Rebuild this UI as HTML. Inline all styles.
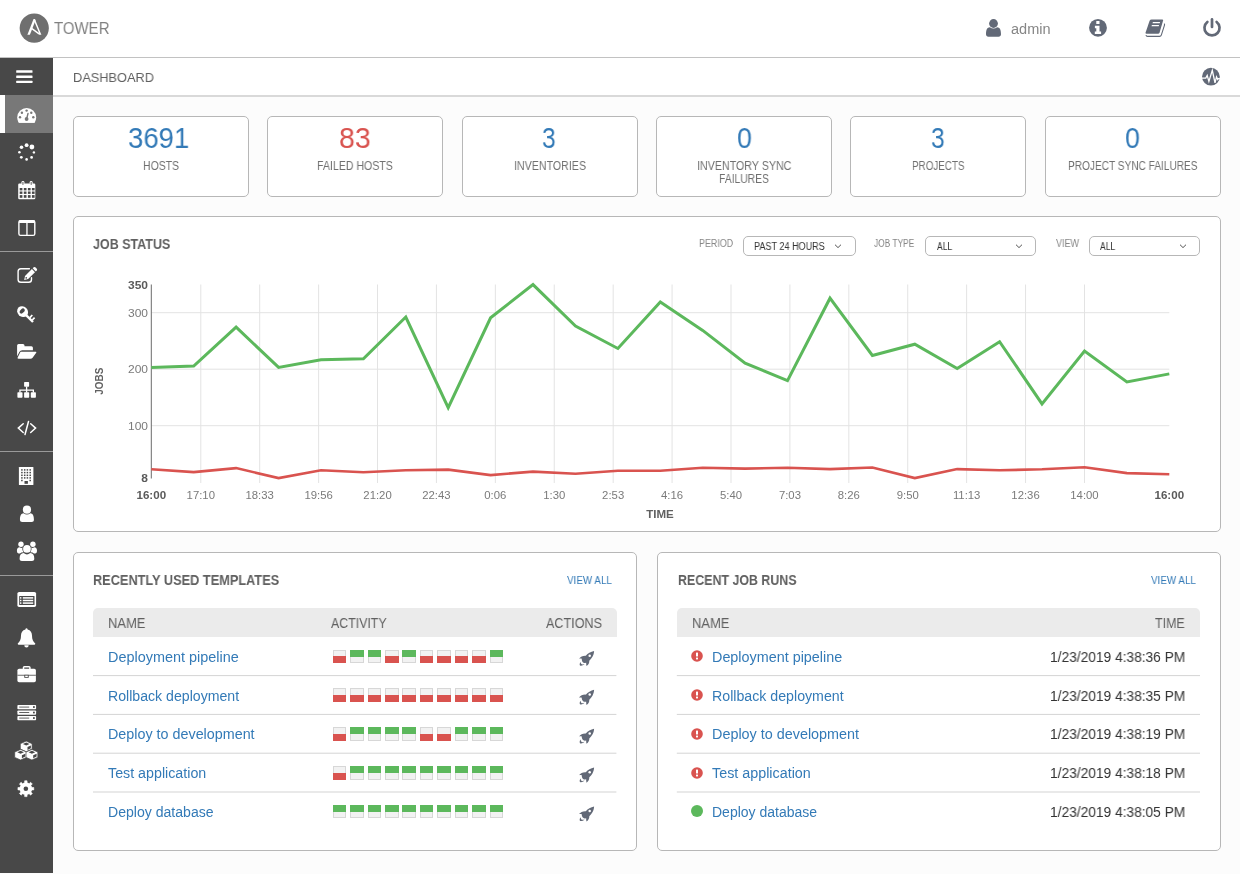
<!DOCTYPE html>
<html><head><meta charset="utf-8"><title>Ansible Tower - Dashboard</title>
<style>
html,body{margin:0;padding:0;}
body{will-change:transform;width:1240px;height:874px;position:relative;overflow:hidden;background:#fcfcfc;font-family:"Liberation Sans",sans-serif;}
.t{will-change:transform;position:absolute;white-space:nowrap;transform-origin:0 50%;}
.b{position:absolute;}
svg{overflow:visible}
</style></head><body>
<div class="b" style="left:0px;top:0px;width:1240px;height:57px;background:#fff;"></div>
<div class="b" style="left:0px;top:57px;width:1240px;height:1px;background:#c2c2c2;"></div>
<div class="b" style="left:53px;top:58px;width:1187px;height:37px;background:#fff;"></div>
<div class="b" style="left:53px;top:95px;width:1187px;height:2px;background:#d9d9d9;"></div>
<div class="b" style="left:0px;top:58px;width:53px;height:815px;background:#484848;"></div>
<div class="b" style="left:0px;top:95px;width:5px;height:38px;background:#fff;"></div>
<div class="b" style="left:5px;top:95px;width:48px;height:38px;background:#787878;"></div>
<div class="b" style="left:0px;top:251px;width:53px;height:1px;background:#9a9a9a;"></div>
<div class="b" style="left:0px;top:451px;width:53px;height:1px;background:#9a9a9a;"></div>
<div class="b" style="left:0px;top:575px;width:53px;height:1px;background:#9a9a9a;"></div>
<span class="t" style="left:54.00px;top:20.01px;font-size:17px;line-height:17px;color:#808080;transform:scaleX(0.8808);">TOWER</span>
<span class="t" style="left:73.30px;top:70.90px;font-size:13px;line-height:13px;color:#606060;transform:scaleX(0.9831);">DASHBOARD</span>
<span class="t" style="left:1010.80px;top:22.15px;font-size:14px;line-height:14px;color:#868686;transform:scaleX(1.0373);">admin</span>
<div class="b" style="left:73px;top:116px;width:176px;height:81px;background:#fff;border:1px solid #b7b7b7;border-radius:5px;box-sizing:border-box;"></div>
<span class="t" style="left:128.30px;top:123.41px;font-size:30px;line-height:30px;color:#337ab7;transform:scaleX(0.9189);">3691</span>
<span class="t" style="left:143.00px;top:159.94px;font-size:12px;line-height:12px;color:#707070;transform:scaleX(0.8721);">HOSTS</span>
<div class="b" style="left:267.2px;top:116px;width:176px;height:81px;background:#fff;border:1px solid #b7b7b7;border-radius:5px;box-sizing:border-box;"></div>
<span class="t" style="left:339.00px;top:123.41px;font-size:30px;line-height:30px;color:#d9534f;transform:scaleX(0.9489);">83</span>
<span class="t" style="left:317.30px;top:159.94px;font-size:12px;line-height:12px;color:#707070;transform:scaleX(0.8810);">FAILED HOSTS</span>
<div class="b" style="left:461.6px;top:116px;width:176px;height:81px;background:#fff;border:1px solid #b7b7b7;border-radius:5px;box-sizing:border-box;"></div>
<span class="t" style="left:542.30px;top:123.41px;font-size:30px;line-height:30px;color:#337ab7;transform:scaleX(0.8214);">3</span>
<span class="t" style="left:513.60px;top:159.94px;font-size:12px;line-height:12px;color:#707070;transform:scaleX(0.8876);">INVENTORIES</span>
<div class="b" style="left:656px;top:116px;width:176px;height:81px;background:#fff;border:1px solid #b7b7b7;border-radius:5px;box-sizing:border-box;"></div>
<span class="t" style="left:736.50px;top:123.41px;font-size:30px;line-height:30px;color:#337ab7;transform:scaleX(0.8929);">0</span>
<span class="t" style="left:696.75px;top:159.94px;font-size:12px;line-height:12px;color:#707070;transform:scaleX(0.8908);">INVENTORY SYNC</span>
<span class="t" style="left:719.00px;top:173.34px;font-size:12px;line-height:12px;color:#707070;transform:scaleX(0.8609);">FAILURES</span>
<div class="b" style="left:850.3px;top:116px;width:176px;height:81px;background:#fff;border:1px solid #b7b7b7;border-radius:5px;box-sizing:border-box;"></div>
<span class="t" style="left:931.20px;top:123.41px;font-size:30px;line-height:30px;color:#337ab7;transform:scaleX(0.8214);">3</span>
<span class="t" style="left:912.10px;top:159.94px;font-size:12px;line-height:12px;color:#707070;transform:scaleX(0.8193);">PROJECTS</span>
<div class="b" style="left:1044.8px;top:116px;width:176px;height:81px;background:#fff;border:1px solid #b7b7b7;border-radius:5px;box-sizing:border-box;"></div>
<span class="t" style="left:1125.20px;top:123.41px;font-size:30px;line-height:30px;color:#337ab7;transform:scaleX(0.8929);">0</span>
<span class="t" style="left:1068.05px;top:159.94px;font-size:12px;line-height:12px;color:#707070;transform:scaleX(0.8418);">PROJECT SYNC FAILURES</span>
<div class="b" style="left:73px;top:216px;width:1148px;height:316px;background:#fff;border:1px solid #b7b7b7;border-radius:5px;box-sizing:border-box;"></div>
<span class="t" style="left:92.70px;top:237.35px;font-size:14px;line-height:14px;color:#606060;font-weight:700;transform:scaleX(0.8920);">JOB STATUS</span>
<span class="t" style="left:698.70px;top:238.73px;font-size:10px;line-height:10px;color:#868686;transform:scaleX(0.8930);">PERIOD</span>
<span class="t" style="left:874.40px;top:238.73px;font-size:10px;line-height:10px;color:#868686;transform:scaleX(0.8361);">JOB TYPE</span>
<span class="t" style="left:1056.10px;top:238.73px;font-size:10px;line-height:10px;color:#868686;transform:scaleX(0.9023);">VIEW</span>
<div class="b" style="left:743px;top:236px;width:112.5px;height:20px;background:#fff;border:1px solid #b7b7b7;border-radius:5px;box-sizing:border-box;"></div>
<span class="t" style="left:754.20px;top:241.53px;font-size:10px;line-height:10px;color:#333;transform:scaleX(0.9077);">PAST 24 HOURS</span>
<svg class="b" style="left:833.4px;top:241px;width:10px;height:10px" viewBox="-5 -5 10 10"><path d="M-3 -1.3 L0 1.6 L3 -1.3" fill="none" stroke="#555" stroke-width="1"/></svg>
<div class="b" style="left:925.3px;top:236px;width:111px;height:20px;background:#fff;border:1px solid #b7b7b7;border-radius:5px;box-sizing:border-box;"></div>
<span class="t" style="left:936.50px;top:241.53px;font-size:10px;line-height:10px;color:#333;transform:scaleX(0.8539);">ALL</span>
<svg class="b" style="left:1014.0px;top:241px;width:10px;height:10px" viewBox="-5 -5 10 10"><path d="M-3 -1.3 L0 1.6 L3 -1.3" fill="none" stroke="#555" stroke-width="1"/></svg>
<div class="b" style="left:1089px;top:236px;width:111px;height:20px;background:#fff;border:1px solid #b7b7b7;border-radius:5px;box-sizing:border-box;"></div>
<span class="t" style="left:1100.20px;top:241.53px;font-size:10px;line-height:10px;color:#333;transform:scaleX(0.8539);">ALL</span>
<svg class="b" style="left:1177.7px;top:241px;width:10px;height:10px" viewBox="-5 -5 10 10"><path d="M-3 -1.3 L0 1.6 L3 -1.3" fill="none" stroke="#555" stroke-width="1"/></svg>
<svg class="b" style="left:0;top:0;width:1240px;height:874px" viewBox="0 0 1240 874" font-family="Liberation Sans, sans-serif">
<line x1="151.3" x2="1169.3" y1="312.7" y2="312.7" stroke="#e3e3e3" stroke-width="1"/>
<line x1="151.3" x2="1169.3" y1="369.2" y2="369.2" stroke="#e3e3e3" stroke-width="1"/>
<line x1="151.3" x2="1169.3" y1="425.7" y2="425.7" stroke="#e3e3e3" stroke-width="1"/>
<line x1="200.79" x2="200.79" y1="284.5" y2="483" stroke="#e3e3e3" stroke-width="1"/>
<text x="200.79" y="498.5" font-size="11" fill="#7a7a7a" text-anchor="middle" textLength="28.37" lengthAdjust="spacingAndGlyphs">17:10</text>
<line x1="259.70" x2="259.70" y1="284.5" y2="483" stroke="#e3e3e3" stroke-width="1"/>
<text x="259.70" y="498.5" font-size="11" fill="#7a7a7a" text-anchor="middle" textLength="28.37" lengthAdjust="spacingAndGlyphs">18:33</text>
<line x1="318.61" x2="318.61" y1="284.5" y2="483" stroke="#e3e3e3" stroke-width="1"/>
<text x="318.61" y="498.5" font-size="11" fill="#7a7a7a" text-anchor="middle" textLength="28.37" lengthAdjust="spacingAndGlyphs">19:56</text>
<line x1="377.52" x2="377.52" y1="284.5" y2="483" stroke="#e3e3e3" stroke-width="1"/>
<text x="377.52" y="498.5" font-size="11" fill="#7a7a7a" text-anchor="middle" textLength="28.37" lengthAdjust="spacingAndGlyphs">21:20</text>
<line x1="436.43" x2="436.43" y1="284.5" y2="483" stroke="#e3e3e3" stroke-width="1"/>
<text x="436.43" y="498.5" font-size="11" fill="#7a7a7a" text-anchor="middle" textLength="28.37" lengthAdjust="spacingAndGlyphs">22:43</text>
<line x1="495.35" x2="495.35" y1="284.5" y2="483" stroke="#e3e3e3" stroke-width="1"/>
<text x="495.35" y="498.5" font-size="11" fill="#7a7a7a" text-anchor="middle" textLength="22.07" lengthAdjust="spacingAndGlyphs">0:06</text>
<line x1="554.26" x2="554.26" y1="284.5" y2="483" stroke="#e3e3e3" stroke-width="1"/>
<text x="554.26" y="498.5" font-size="11" fill="#7a7a7a" text-anchor="middle" textLength="22.07" lengthAdjust="spacingAndGlyphs">1:30</text>
<line x1="613.17" x2="613.17" y1="284.5" y2="483" stroke="#e3e3e3" stroke-width="1"/>
<text x="613.17" y="498.5" font-size="11" fill="#7a7a7a" text-anchor="middle" textLength="22.07" lengthAdjust="spacingAndGlyphs">2:53</text>
<line x1="672.08" x2="672.08" y1="284.5" y2="483" stroke="#e3e3e3" stroke-width="1"/>
<text x="672.08" y="498.5" font-size="11" fill="#7a7a7a" text-anchor="middle" textLength="22.07" lengthAdjust="spacingAndGlyphs">4:16</text>
<line x1="730.99" x2="730.99" y1="284.5" y2="483" stroke="#e3e3e3" stroke-width="1"/>
<text x="730.99" y="498.5" font-size="11" fill="#7a7a7a" text-anchor="middle" textLength="22.07" lengthAdjust="spacingAndGlyphs">5:40</text>
<line x1="789.91" x2="789.91" y1="284.5" y2="483" stroke="#e3e3e3" stroke-width="1"/>
<text x="789.91" y="498.5" font-size="11" fill="#7a7a7a" text-anchor="middle" textLength="22.07" lengthAdjust="spacingAndGlyphs">7:03</text>
<line x1="848.82" x2="848.82" y1="284.5" y2="483" stroke="#e3e3e3" stroke-width="1"/>
<text x="848.82" y="498.5" font-size="11" fill="#7a7a7a" text-anchor="middle" textLength="22.07" lengthAdjust="spacingAndGlyphs">8:26</text>
<line x1="907.73" x2="907.73" y1="284.5" y2="483" stroke="#e3e3e3" stroke-width="1"/>
<text x="907.73" y="498.5" font-size="11" fill="#7a7a7a" text-anchor="middle" textLength="22.07" lengthAdjust="spacingAndGlyphs">9:50</text>
<line x1="966.64" x2="966.64" y1="284.5" y2="483" stroke="#e3e3e3" stroke-width="1"/>
<text x="966.64" y="498.5" font-size="11" fill="#7a7a7a" text-anchor="middle" textLength="27.53" lengthAdjust="spacingAndGlyphs">11:13</text>
<line x1="1025.55" x2="1025.55" y1="284.5" y2="483" stroke="#e3e3e3" stroke-width="1"/>
<text x="1025.55" y="498.5" font-size="11" fill="#7a7a7a" text-anchor="middle" textLength="28.37" lengthAdjust="spacingAndGlyphs">12:36</text>
<line x1="1084.47" x2="1084.47" y1="284.5" y2="483" stroke="#e3e3e3" stroke-width="1"/>
<text x="1084.47" y="498.5" font-size="11" fill="#7a7a7a" text-anchor="middle" textLength="28.37" lengthAdjust="spacingAndGlyphs">14:00</text>
<line x1="151.3" x2="151.3" y1="284.5" y2="478.5" stroke="#6b6b6b" stroke-width="1"/>
<text x="148" y="288.6" font-size="11" font-weight="700" fill="#5a5a5a" text-anchor="end" textLength="20.02" lengthAdjust="spacingAndGlyphs">350</text>
<text x="148" y="316.7" font-size="11" fill="#7a7a7a" text-anchor="end" textLength="20.02" lengthAdjust="spacingAndGlyphs">300</text>
<text x="148" y="373.2" font-size="11" fill="#7a7a7a" text-anchor="end" textLength="20.02" lengthAdjust="spacingAndGlyphs">200</text>
<text x="148" y="429.7" font-size="11" fill="#7a7a7a" text-anchor="end" textLength="20.02" lengthAdjust="spacingAndGlyphs">100</text>
<text x="148" y="481.6" font-size="11" font-weight="700" fill="#5a5a5a" text-anchor="end" textLength="6.67" lengthAdjust="spacingAndGlyphs">8</text>
<text x="151.3" y="498.5" font-size="11" font-weight="700" fill="#5a5a5a" text-anchor="middle" textLength="29.6" lengthAdjust="spacingAndGlyphs">16:00</text>
<text x="1169.3" y="498.5" font-size="11" font-weight="700" fill="#5a5a5a" text-anchor="middle" textLength="29.6" lengthAdjust="spacingAndGlyphs">16:00</text>
<text x="660" y="518.2" font-size="11.5" font-weight="700" fill="#606060" text-anchor="middle" textLength="27.6" lengthAdjust="spacingAndGlyphs">TIME</text>
<text transform="translate(103,381.2) rotate(-90)" font-size="11.5" font-weight="700" fill="#606060" text-anchor="middle" textLength="27" lengthAdjust="spacingAndGlyphs">JOBS</text>
<polyline points="151.3,367.4 193.7,366.1 236.1,327.1 278.6,367.4 321.0,359.8 363.4,358.8 405.8,317.0 448.2,407.6 490.6,317.8 533.0,284.6 575.5,326.1 617.9,348.5 660.3,301.9 702.7,330.4 745.1,363.1 787.5,380.7 830.0,298.2 872.4,355.5 914.8,344.2 957.2,368.6 999.6,341.7 1042.0,403.9 1084.5,351.0 1126.9,382.0 1169.3,373.9" fill="none" stroke="#5cb85c" stroke-width="3" stroke-linejoin="miter"/>
<polyline points="151.3,469.3 193.7,472.1 236.1,468.1 278.6,478.1 321.0,470.3 363.4,472.3 405.8,470.3 448.2,469.6 490.6,475.1 533.0,471.6 575.5,473.8 617.9,470.8 660.3,470.8 702.7,467.8 745.1,468.6 787.5,467.8 830.0,469.1 872.4,467.5 914.8,478.1 957.2,469.1 999.6,470.3 1042.0,469.3 1084.5,467.3 1126.9,473.1 1169.3,474.3" fill="none" stroke="#d9534f" stroke-width="2.6" stroke-linejoin="miter"/>
</svg>
<div class="b" style="left:73px;top:552px;width:564px;height:299px;background:#fff;border:1px solid #b7b7b7;border-radius:5px;box-sizing:border-box;"></div>
<div class="b" style="left:656.5px;top:552px;width:564.5px;height:299px;background:#fff;border:1px solid #b7b7b7;border-radius:5px;box-sizing:border-box;"></div>
<span class="t" style="left:93.40px;top:573.45px;font-size:14px;line-height:14px;color:#606060;font-weight:700;transform:scaleX(0.9111);">RECENTLY USED TEMPLATES</span>
<span class="t" style="left:677.70px;top:573.45px;font-size:14px;line-height:14px;color:#606060;font-weight:700;transform:scaleX(0.8861);">RECENT JOB RUNS</span>
<span class="t" style="left:566.80px;top:574.99px;font-size:11px;line-height:11px;color:#337ab7;transform:scaleX(0.8951);">VIEW ALL</span>
<span class="t" style="left:1150.60px;top:574.99px;font-size:11px;line-height:11px;color:#337ab7;transform:scaleX(0.8951);">VIEW ALL</span>
<div class="b" style="left:93px;top:608px;width:523.5px;height:29px;background:#ebebeb;border-radius:5px 5px 0 0;"></div>
<div class="b" style="left:676.8px;top:608px;width:523.2px;height:29px;background:#ebebeb;border-radius:5px 5px 0 0;"></div>
<span class="t" style="left:107.90px;top:616.05px;font-size:14px;line-height:14px;color:#606060;transform:scaleX(0.9268);">NAME</span>
<span class="t" style="left:331.00px;top:616.05px;font-size:14px;line-height:14px;color:#606060;transform:scaleX(0.8825);">ACTIVITY</span>
<span class="t" style="left:545.80px;top:616.05px;font-size:14px;line-height:14px;color:#606060;transform:scaleX(0.8977);">ACTIONS</span>
<span class="t" style="left:691.70px;top:616.05px;font-size:14px;line-height:14px;color:#606060;transform:scaleX(0.9268);">NAME</span>
<span class="t" style="left:1155.40px;top:616.05px;font-size:14px;line-height:14px;color:#606060;transform:scaleX(0.8906);">TIME</span>
<span class="t" style="left:107.90px;top:649.65px;font-size:14px;line-height:14px;color:#337ab7;transform:scaleX(1.0304);">Deployment pipeline</span>
<span class="t" style="left:711.60px;top:649.65px;font-size:14px;line-height:14px;color:#337ab7;transform:scaleX(1.0265);">Deployment pipeline</span>
<span class="t" style="left:1049.90px;top:649.65px;font-size:14px;line-height:14px;color:#333;transform:scaleX(0.9821);">1/23/2019 4:38:36 PM</span>
<svg class="b" style="left:0;top:0;width:1240px;height:874px" viewBox="0 0 1240 874"><rect x="93" y="675.10" width="523.4" height="1" fill="#d4d4d4"/><rect x="676.8" y="675.10" width="523.2" height="1" fill="#d4d4d4"/></svg>
<div class="b" style="left:332.70px;top:649.50px;width:13.5px;height:13.5px;background:#f2f2f2;border:1px solid #d7d7d7;box-sizing:border-box;"><div style="position:absolute;left:-1px;right:-1px;bottom:-1px;height:7px;background:#d9534f"></div></div>
<div class="b" style="left:350.14px;top:649.50px;width:13.5px;height:13.5px;background:#f2f2f2;border:1px solid #d7d7d7;box-sizing:border-box;"><div style="position:absolute;left:-1px;right:-1px;top:-1px;height:7px;background:#5cb85c"></div></div>
<div class="b" style="left:367.58px;top:649.50px;width:13.5px;height:13.5px;background:#f2f2f2;border:1px solid #d7d7d7;box-sizing:border-box;"><div style="position:absolute;left:-1px;right:-1px;top:-1px;height:7px;background:#5cb85c"></div></div>
<div class="b" style="left:385.02px;top:649.50px;width:13.5px;height:13.5px;background:#f2f2f2;border:1px solid #d7d7d7;box-sizing:border-box;"><div style="position:absolute;left:-1px;right:-1px;bottom:-1px;height:7px;background:#d9534f"></div></div>
<div class="b" style="left:402.46px;top:649.50px;width:13.5px;height:13.5px;background:#f2f2f2;border:1px solid #d7d7d7;box-sizing:border-box;"><div style="position:absolute;left:-1px;right:-1px;top:-1px;height:7px;background:#5cb85c"></div></div>
<div class="b" style="left:419.90px;top:649.50px;width:13.5px;height:13.5px;background:#f2f2f2;border:1px solid #d7d7d7;box-sizing:border-box;"><div style="position:absolute;left:-1px;right:-1px;bottom:-1px;height:7px;background:#d9534f"></div></div>
<div class="b" style="left:437.34px;top:649.50px;width:13.5px;height:13.5px;background:#f2f2f2;border:1px solid #d7d7d7;box-sizing:border-box;"><div style="position:absolute;left:-1px;right:-1px;bottom:-1px;height:7px;background:#d9534f"></div></div>
<div class="b" style="left:454.78px;top:649.50px;width:13.5px;height:13.5px;background:#f2f2f2;border:1px solid #d7d7d7;box-sizing:border-box;"><div style="position:absolute;left:-1px;right:-1px;bottom:-1px;height:7px;background:#d9534f"></div></div>
<div class="b" style="left:472.22px;top:649.50px;width:13.5px;height:13.5px;background:#f2f2f2;border:1px solid #d7d7d7;box-sizing:border-box;"><div style="position:absolute;left:-1px;right:-1px;bottom:-1px;height:7px;background:#d9534f"></div></div>
<div class="b" style="left:489.66px;top:649.50px;width:13.5px;height:13.5px;background:#f2f2f2;border:1px solid #d7d7d7;box-sizing:border-box;"><div style="position:absolute;left:-1px;right:-1px;top:-1px;height:7px;background:#5cb85c"></div></div>

<svg class="b" style="left:690px;top:649.00px;width:14px;height:14px" viewBox="-7 -7 14 14"><circle r="5.8" fill="#d9534f"/><rect x="-1" y="-3.6" width="2" height="4.2" rx=".5" fill="#fff"/><rect x="-1" y="1.5" width="2" height="2" rx=".4" fill="#fff"/></svg>
<span class="t" style="left:107.90px;top:688.50px;font-size:14px;line-height:14px;color:#337ab7;transform:scaleX(1.0091);">Rollback deployment</span>
<span class="t" style="left:711.60px;top:688.50px;font-size:14px;line-height:14px;color:#337ab7;transform:scaleX(1.0129);">Rollback deployment</span>
<span class="t" style="left:1049.90px;top:688.50px;font-size:14px;line-height:14px;color:#333;transform:scaleX(0.9821);">1/23/2019 4:38:35 PM</span>
<svg class="b" style="left:0;top:0;width:1240px;height:874px" viewBox="0 0 1240 874"><rect x="93" y="713.90" width="523.4" height="1" fill="#d4d4d4"/><rect x="676.8" y="713.90" width="523.2" height="1" fill="#d4d4d4"/></svg>
<div class="b" style="left:332.70px;top:688.35px;width:13.5px;height:13.5px;background:#f2f2f2;border:1px solid #d7d7d7;box-sizing:border-box;"><div style="position:absolute;left:-1px;right:-1px;bottom:-1px;height:7px;background:#d9534f"></div></div>
<div class="b" style="left:350.14px;top:688.35px;width:13.5px;height:13.5px;background:#f2f2f2;border:1px solid #d7d7d7;box-sizing:border-box;"><div style="position:absolute;left:-1px;right:-1px;bottom:-1px;height:7px;background:#d9534f"></div></div>
<div class="b" style="left:367.58px;top:688.35px;width:13.5px;height:13.5px;background:#f2f2f2;border:1px solid #d7d7d7;box-sizing:border-box;"><div style="position:absolute;left:-1px;right:-1px;bottom:-1px;height:7px;background:#d9534f"></div></div>
<div class="b" style="left:385.02px;top:688.35px;width:13.5px;height:13.5px;background:#f2f2f2;border:1px solid #d7d7d7;box-sizing:border-box;"><div style="position:absolute;left:-1px;right:-1px;bottom:-1px;height:7px;background:#d9534f"></div></div>
<div class="b" style="left:402.46px;top:688.35px;width:13.5px;height:13.5px;background:#f2f2f2;border:1px solid #d7d7d7;box-sizing:border-box;"><div style="position:absolute;left:-1px;right:-1px;bottom:-1px;height:7px;background:#d9534f"></div></div>
<div class="b" style="left:419.90px;top:688.35px;width:13.5px;height:13.5px;background:#f2f2f2;border:1px solid #d7d7d7;box-sizing:border-box;"><div style="position:absolute;left:-1px;right:-1px;bottom:-1px;height:7px;background:#d9534f"></div></div>
<div class="b" style="left:437.34px;top:688.35px;width:13.5px;height:13.5px;background:#f2f2f2;border:1px solid #d7d7d7;box-sizing:border-box;"><div style="position:absolute;left:-1px;right:-1px;bottom:-1px;height:7px;background:#d9534f"></div></div>
<div class="b" style="left:454.78px;top:688.35px;width:13.5px;height:13.5px;background:#f2f2f2;border:1px solid #d7d7d7;box-sizing:border-box;"><div style="position:absolute;left:-1px;right:-1px;bottom:-1px;height:7px;background:#d9534f"></div></div>
<div class="b" style="left:472.22px;top:688.35px;width:13.5px;height:13.5px;background:#f2f2f2;border:1px solid #d7d7d7;box-sizing:border-box;"><div style="position:absolute;left:-1px;right:-1px;bottom:-1px;height:7px;background:#d9534f"></div></div>
<div class="b" style="left:489.66px;top:688.35px;width:13.5px;height:13.5px;background:#f2f2f2;border:1px solid #d7d7d7;box-sizing:border-box;"><div style="position:absolute;left:-1px;right:-1px;bottom:-1px;height:7px;background:#d9534f"></div></div>

<svg class="b" style="left:690px;top:687.85px;width:14px;height:14px" viewBox="-7 -7 14 14"><circle r="5.8" fill="#d9534f"/><rect x="-1" y="-3.6" width="2" height="4.2" rx=".5" fill="#fff"/><rect x="-1" y="1.5" width="2" height="2" rx=".4" fill="#fff"/></svg>
<span class="t" style="left:107.90px;top:727.35px;font-size:14px;line-height:14px;color:#337ab7;transform:scaleX(1.0236);">Deploy to development</span>
<span class="t" style="left:711.60px;top:727.35px;font-size:14px;line-height:14px;color:#337ab7;transform:scaleX(1.0271);">Deploy to development</span>
<span class="t" style="left:1049.90px;top:727.35px;font-size:14px;line-height:14px;color:#333;transform:scaleX(0.9821);">1/23/2019 4:38:19 PM</span>
<svg class="b" style="left:0;top:0;width:1240px;height:874px" viewBox="0 0 1240 874"><rect x="93" y="752.70" width="523.4" height="1" fill="#d4d4d4"/><rect x="676.8" y="752.70" width="523.2" height="1" fill="#d4d4d4"/></svg>
<div class="b" style="left:332.70px;top:727.20px;width:13.5px;height:13.5px;background:#f2f2f2;border:1px solid #d7d7d7;box-sizing:border-box;"><div style="position:absolute;left:-1px;right:-1px;bottom:-1px;height:7px;background:#d9534f"></div></div>
<div class="b" style="left:350.14px;top:727.20px;width:13.5px;height:13.5px;background:#f2f2f2;border:1px solid #d7d7d7;box-sizing:border-box;"><div style="position:absolute;left:-1px;right:-1px;top:-1px;height:7px;background:#5cb85c"></div></div>
<div class="b" style="left:367.58px;top:727.20px;width:13.5px;height:13.5px;background:#f2f2f2;border:1px solid #d7d7d7;box-sizing:border-box;"><div style="position:absolute;left:-1px;right:-1px;top:-1px;height:7px;background:#5cb85c"></div></div>
<div class="b" style="left:385.02px;top:727.20px;width:13.5px;height:13.5px;background:#f2f2f2;border:1px solid #d7d7d7;box-sizing:border-box;"><div style="position:absolute;left:-1px;right:-1px;top:-1px;height:7px;background:#5cb85c"></div></div>
<div class="b" style="left:402.46px;top:727.20px;width:13.5px;height:13.5px;background:#f2f2f2;border:1px solid #d7d7d7;box-sizing:border-box;"><div style="position:absolute;left:-1px;right:-1px;top:-1px;height:7px;background:#5cb85c"></div></div>
<div class="b" style="left:419.90px;top:727.20px;width:13.5px;height:13.5px;background:#f2f2f2;border:1px solid #d7d7d7;box-sizing:border-box;"><div style="position:absolute;left:-1px;right:-1px;bottom:-1px;height:7px;background:#d9534f"></div></div>
<div class="b" style="left:437.34px;top:727.20px;width:13.5px;height:13.5px;background:#f2f2f2;border:1px solid #d7d7d7;box-sizing:border-box;"><div style="position:absolute;left:-1px;right:-1px;bottom:-1px;height:7px;background:#d9534f"></div></div>
<div class="b" style="left:454.78px;top:727.20px;width:13.5px;height:13.5px;background:#f2f2f2;border:1px solid #d7d7d7;box-sizing:border-box;"><div style="position:absolute;left:-1px;right:-1px;top:-1px;height:7px;background:#5cb85c"></div></div>
<div class="b" style="left:472.22px;top:727.20px;width:13.5px;height:13.5px;background:#f2f2f2;border:1px solid #d7d7d7;box-sizing:border-box;"><div style="position:absolute;left:-1px;right:-1px;top:-1px;height:7px;background:#5cb85c"></div></div>
<div class="b" style="left:489.66px;top:727.20px;width:13.5px;height:13.5px;background:#f2f2f2;border:1px solid #d7d7d7;box-sizing:border-box;"><div style="position:absolute;left:-1px;right:-1px;top:-1px;height:7px;background:#5cb85c"></div></div>

<svg class="b" style="left:690px;top:726.70px;width:14px;height:14px" viewBox="-7 -7 14 14"><circle r="5.8" fill="#d9534f"/><rect x="-1" y="-3.6" width="2" height="4.2" rx=".5" fill="#fff"/><rect x="-1" y="1.5" width="2" height="2" rx=".4" fill="#fff"/></svg>
<span class="t" style="left:107.90px;top:766.20px;font-size:14px;line-height:14px;color:#337ab7;transform:scaleX(1.0180);">Test application</span>
<span class="t" style="left:711.60px;top:766.20px;font-size:14px;line-height:14px;color:#337ab7;transform:scaleX(1.0232);">Test application</span>
<span class="t" style="left:1049.90px;top:766.20px;font-size:14px;line-height:14px;color:#333;transform:scaleX(0.9821);">1/23/2019 4:38:18 PM</span>
<svg class="b" style="left:0;top:0;width:1240px;height:874px" viewBox="0 0 1240 874"><rect x="93" y="791.50" width="523.4" height="1" fill="#d4d4d4"/><rect x="676.8" y="791.50" width="523.2" height="1" fill="#d4d4d4"/></svg>
<div class="b" style="left:332.70px;top:766.05px;width:13.5px;height:13.5px;background:#f2f2f2;border:1px solid #d7d7d7;box-sizing:border-box;"><div style="position:absolute;left:-1px;right:-1px;bottom:-1px;height:7px;background:#d9534f"></div></div>
<div class="b" style="left:350.14px;top:766.05px;width:13.5px;height:13.5px;background:#f2f2f2;border:1px solid #d7d7d7;box-sizing:border-box;"><div style="position:absolute;left:-1px;right:-1px;top:-1px;height:7px;background:#5cb85c"></div></div>
<div class="b" style="left:367.58px;top:766.05px;width:13.5px;height:13.5px;background:#f2f2f2;border:1px solid #d7d7d7;box-sizing:border-box;"><div style="position:absolute;left:-1px;right:-1px;top:-1px;height:7px;background:#5cb85c"></div></div>
<div class="b" style="left:385.02px;top:766.05px;width:13.5px;height:13.5px;background:#f2f2f2;border:1px solid #d7d7d7;box-sizing:border-box;"><div style="position:absolute;left:-1px;right:-1px;top:-1px;height:7px;background:#5cb85c"></div></div>
<div class="b" style="left:402.46px;top:766.05px;width:13.5px;height:13.5px;background:#f2f2f2;border:1px solid #d7d7d7;box-sizing:border-box;"><div style="position:absolute;left:-1px;right:-1px;top:-1px;height:7px;background:#5cb85c"></div></div>
<div class="b" style="left:419.90px;top:766.05px;width:13.5px;height:13.5px;background:#f2f2f2;border:1px solid #d7d7d7;box-sizing:border-box;"><div style="position:absolute;left:-1px;right:-1px;top:-1px;height:7px;background:#5cb85c"></div></div>
<div class="b" style="left:437.34px;top:766.05px;width:13.5px;height:13.5px;background:#f2f2f2;border:1px solid #d7d7d7;box-sizing:border-box;"><div style="position:absolute;left:-1px;right:-1px;top:-1px;height:7px;background:#5cb85c"></div></div>
<div class="b" style="left:454.78px;top:766.05px;width:13.5px;height:13.5px;background:#f2f2f2;border:1px solid #d7d7d7;box-sizing:border-box;"><div style="position:absolute;left:-1px;right:-1px;top:-1px;height:7px;background:#5cb85c"></div></div>
<div class="b" style="left:472.22px;top:766.05px;width:13.5px;height:13.5px;background:#f2f2f2;border:1px solid #d7d7d7;box-sizing:border-box;"><div style="position:absolute;left:-1px;right:-1px;top:-1px;height:7px;background:#5cb85c"></div></div>
<div class="b" style="left:489.66px;top:766.05px;width:13.5px;height:13.5px;background:#f2f2f2;border:1px solid #d7d7d7;box-sizing:border-box;"><div style="position:absolute;left:-1px;right:-1px;top:-1px;height:7px;background:#5cb85c"></div></div>

<svg class="b" style="left:690px;top:765.55px;width:14px;height:14px" viewBox="-7 -7 14 14"><circle r="5.8" fill="#d9534f"/><rect x="-1" y="-3.6" width="2" height="4.2" rx=".5" fill="#fff"/><rect x="-1" y="1.5" width="2" height="2" rx=".4" fill="#fff"/></svg>
<span class="t" style="left:107.90px;top:805.05px;font-size:14px;line-height:14px;color:#337ab7;transform:scaleX(1.0048);">Deploy database</span>
<span class="t" style="left:711.60px;top:805.05px;font-size:14px;line-height:14px;color:#337ab7;transform:scaleX(1.0000);">Deploy database</span>
<span class="t" style="left:1049.90px;top:805.05px;font-size:14px;line-height:14px;color:#333;transform:scaleX(0.9821);">1/23/2019 4:38:05 PM</span>
<div class="b" style="left:332.70px;top:804.90px;width:13.5px;height:13.5px;background:#f2f2f2;border:1px solid #d7d7d7;box-sizing:border-box;"><div style="position:absolute;left:-1px;right:-1px;top:-1px;height:7px;background:#5cb85c"></div></div>
<div class="b" style="left:350.14px;top:804.90px;width:13.5px;height:13.5px;background:#f2f2f2;border:1px solid #d7d7d7;box-sizing:border-box;"><div style="position:absolute;left:-1px;right:-1px;top:-1px;height:7px;background:#5cb85c"></div></div>
<div class="b" style="left:367.58px;top:804.90px;width:13.5px;height:13.5px;background:#f2f2f2;border:1px solid #d7d7d7;box-sizing:border-box;"><div style="position:absolute;left:-1px;right:-1px;top:-1px;height:7px;background:#5cb85c"></div></div>
<div class="b" style="left:385.02px;top:804.90px;width:13.5px;height:13.5px;background:#f2f2f2;border:1px solid #d7d7d7;box-sizing:border-box;"><div style="position:absolute;left:-1px;right:-1px;top:-1px;height:7px;background:#5cb85c"></div></div>
<div class="b" style="left:402.46px;top:804.90px;width:13.5px;height:13.5px;background:#f2f2f2;border:1px solid #d7d7d7;box-sizing:border-box;"><div style="position:absolute;left:-1px;right:-1px;top:-1px;height:7px;background:#5cb85c"></div></div>
<div class="b" style="left:419.90px;top:804.90px;width:13.5px;height:13.5px;background:#f2f2f2;border:1px solid #d7d7d7;box-sizing:border-box;"><div style="position:absolute;left:-1px;right:-1px;top:-1px;height:7px;background:#5cb85c"></div></div>
<div class="b" style="left:437.34px;top:804.90px;width:13.5px;height:13.5px;background:#f2f2f2;border:1px solid #d7d7d7;box-sizing:border-box;"><div style="position:absolute;left:-1px;right:-1px;top:-1px;height:7px;background:#5cb85c"></div></div>
<div class="b" style="left:454.78px;top:804.90px;width:13.5px;height:13.5px;background:#f2f2f2;border:1px solid #d7d7d7;box-sizing:border-box;"><div style="position:absolute;left:-1px;right:-1px;top:-1px;height:7px;background:#5cb85c"></div></div>
<div class="b" style="left:472.22px;top:804.90px;width:13.5px;height:13.5px;background:#f2f2f2;border:1px solid #d7d7d7;box-sizing:border-box;"><div style="position:absolute;left:-1px;right:-1px;top:-1px;height:7px;background:#5cb85c"></div></div>
<div class="b" style="left:489.66px;top:804.90px;width:13.5px;height:13.5px;background:#f2f2f2;border:1px solid #d7d7d7;box-sizing:border-box;"><div style="position:absolute;left:-1px;right:-1px;top:-1px;height:7px;background:#5cb85c"></div></div>

<svg class="b" style="left:690px;top:804.40px;width:14px;height:14px" viewBox="-7 -7 14 14"><circle r="6" fill="#5cb85c"/></svg>
<svg class="b" style="left:0;top:0;width:1240px;height:874px" viewBox="0 0 1240 874"><circle cx="34.25" cy="28.1" r="14.6" fill="#6f6f6f"/><clipPath id="lg"><rect x="20" y="15" width="28" height="19.75"/></clipPath><g clip-path="url(#lg)" stroke="#fff" fill="none"><path d="M27.95 36.6 L34.55 19.6" stroke-width="2.35"/><path d="M34.2 19.3 L40.75 35.2 L31.6 28.3" stroke-width="1.45" stroke-linejoin="miter" stroke-miterlimit="10"/><circle cx="34.45" cy="19.75" r=".75" fill="#fff" stroke="none"/></g><g transform="translate(993.5,19.1) scale(1.0)"><path d="M-7.5 15.2 C-7.5 10.5 -6.3 8.3 -3.6 8.1 C-2.5 9.0 -1.3 9.5 0 9.5 C1.3 9.5 2.5 9.0 3.6 8.1 C6.3 8.3 7.5 10.5 7.5 15.2 C7.5 16.7 6.5 17.6 5.1 17.6 L-5.1 17.6 C-6.5 17.6 -7.5 16.7 -7.5 15.2 Z" fill="#626977"/><circle cx="0" cy="4.4" r="4.4" fill="#626977"/></g><circle cx="1098" cy="27.8" r="8.9" fill="#626977"/><path d="M1096.3 21.1 h3.2 v3 h-3.2 z M1094.9 25.8 h4.6 v5.8 h1.6 v2.5 h-6.3 v-2.5 h1.5 v-3.4 h-1.4 z" fill="#fff"/><path d="M1151.6 19.4 L1162.2 19.4 Q1163.4 19.4 1163.1 20.6 L1159.6 32.6 Q1159.2 33.8 1158 33.8 L1146.4 33.8 Q1145.2 33.8 1145.6 32.5 L1149.6 20.8 Q1150.1 19.4 1151.6 19.4 Z" fill="#626977"/><path d="M1164.1 23.6 Q1164.8 24.2 1164.5 25.2 L1161.3 35.2 Q1160.9 36.4 1159.6 36.4 L1147.6 36.4 Q1146.2 36.4 1146.0 35.0" fill="none" stroke="#626977" stroke-width="1.1"/><path d="M1152.9 21.9 h7.2 l-0.4 1.35 h-7.2 z M1151.9 24.9 h7.2 l-0.4 1.35 h-7.2 z" fill="#fff"/><path d="M1216.65 21.95 A7.55 7.55 0 1 1 1207.35 21.95" fill="none" stroke="#626977" stroke-width="2.7" stroke-linecap="round"/><path d="M1212.0 19.4 V26.9" stroke="#626977" stroke-width="2.7" stroke-linecap="round"/><circle cx="1210.9" cy="76.7" r="8.9" fill="#626977"/><path d="M1202 78.1 H1205.8 L1207.2 75.4 L1208.9 81.5 L1212.3 70.4 L1215 82.9 L1216.5 76.9 L1217.7 79.4 L1218.3 78.6 H1219.9" fill="none" stroke="#fff" stroke-width="1.3" stroke-linejoin="miter"/><rect x="16.2" y="70.3" width="16.3" height="2.4" rx=".5" fill="#fff"/><rect x="16.2" y="75.5" width="16.3" height="2.4" rx=".5" fill="#fff"/><rect x="16.2" y="80.7" width="16.3" height="2.4" rx=".5" fill="#fff"/><clipPath id="tc"><rect x="10" y="100" width="34" height="22.8"/></clipPath><g clip-path="url(#tc)"><circle cx="26.7" cy="117.4" r="9.5" fill="#fff"/></g><rect x="18.3" y="120" width="16.8" height="2.8" rx="1.2" fill="#fff"/><circle cx="26.6" cy="110.6" r="1.2" fill="#787878"/><circle cx="21.9" cy="112.7" r="1.2" fill="#787878"/><circle cx="31.3" cy="112.7" r="1.2" fill="#787878"/><circle cx="20.0" cy="117.3" r="1.2" fill="#787878"/><circle cx="33.3" cy="117.3" r="1.2" fill="#787878"/><circle cx="26.6" cy="119.0" r="1.9" fill="#787878"/><path d="M26.7 118.6 L28.0 113.5" stroke="#787878" stroke-width="1.4" stroke-linecap="round"/><circle cx="26.6" cy="145.2" r="1.9" fill="#fff"/><circle cx="31.9" cy="147.0" r="2.4" fill="#fff"/><circle cx="33.9" cy="152.4" r="1.2" fill="#fff"/><circle cx="31.6" cy="157.4" r="1.35" fill="#fff"/><circle cx="26.6" cy="159.4" r="1.3" fill="#fff"/><circle cx="21.3" cy="157.3" r="1.4" fill="#fff"/><circle cx="19.4" cy="152.2" r="1.3" fill="#fff"/><circle cx="21.5" cy="147.3" r="1.8" fill="#fff"/><rect x="18.2" y="183.5" width="17.1" height="15.8" rx="1.2" fill="#fff"/><rect x="21.5" y="180.9" width="2.9" height="5.2" rx="1.3" fill="#fff"/><rect x="22.5" y="182.0" width=".9" height="3.0" rx=".4" fill="#484848"/><rect x="29.7" y="180.9" width="2.9" height="5.2" rx="1.3" fill="#fff"/><rect x="30.7" y="182.0" width=".9" height="3.0" rx=".4" fill="#484848"/><rect x="19.7" y="188.0" width="2.7" height="2.4" fill="#484848"/><rect x="19.7" y="191.5" width="2.7" height="2.4" fill="#484848"/><rect x="19.7" y="195.1" width="2.7" height="2.7" fill="#484848"/><rect x="23.8" y="188.0" width="2.7" height="2.4" fill="#484848"/><rect x="23.8" y="191.5" width="2.7" height="2.4" fill="#484848"/><rect x="23.8" y="195.1" width="2.7" height="2.7" fill="#484848"/><rect x="27.9" y="188.0" width="2.7" height="2.4" fill="#484848"/><rect x="27.9" y="191.5" width="2.7" height="2.4" fill="#484848"/><rect x="27.9" y="195.1" width="2.7" height="2.7" fill="#484848"/><rect x="31.9" y="188.0" width="2.7" height="2.4" fill="#484848"/><rect x="31.9" y="191.5" width="2.7" height="2.4" fill="#484848"/><rect x="31.9" y="195.1" width="2.7" height="2.7" fill="#484848"/><rect x="18.9" y="220.7" width="15.9" height="14.7" rx="1.6" fill="none" stroke="#fff" stroke-width="1.4"/><rect x="18.9" y="220.2" width="15.9" height="2.8" rx=".8" fill="#fff"/><rect x="26.3" y="221" width="1.3" height="14.4" fill="#fff"/><path d="M29.4 268.8 H20.9 Q18.1 268.8 18.1 271.6 V279.4 Q18.1 282.2 20.9 282.2 H28.7 Q31.5 282.2 31.5 279.4 V277.6" fill="none" stroke="#fff" stroke-width="1.4" stroke-linecap="round"/><path d="M24.2 279.9 L25.0 276.0 L31.9 269.1 L35.0 272.2 L28.1 279.1 Z" fill="#fff"/><path d="M32.7 268.3 L33.7 267.3 Q34.5 266.6 35.3 267.3 L36.8 268.8 Q37.5 269.6 36.8 270.4 L35.8 271.4 Z" fill="#fff"/><circle cx="26.2" cy="277.9" r=".8" fill="#484848"/><ellipse cx="22.6" cy="311.6" rx="5.1" ry="5.8" transform="rotate(-45 22.6 311.6)" fill="#fff"/><ellipse cx="22.2" cy="311.0" rx="3.0" ry="1.9" transform="rotate(-45 22.2 311.0)" fill="#484848"/><path d="M25.6 314.6 L33.0 322.0" stroke="#fff" stroke-width="2.4" stroke-linecap="butt"/><path d="M29.9 317.6 L32.3 315.0 M32.3 320.0 L34.6 317.6" stroke="#fff" stroke-width="1.7"/><path d="M17.1 356.2 V345.4 Q17.1 343.9 18.6 343.9 H23.0 Q24.5 343.9 24.5 345.4 V346.3 H31.4 Q32.9 346.3 32.9 347.8 V350.2 H22.2 Q20.4 350.2 19.5 351.8 Z" fill="#fff"/><path d="M21.0 351.7 H35.6 Q36.9 351.7 36.2 352.8 L32.6 357.7 Q31.8 358.7 30.5 358.7 H18.4 Q17.0 358.7 17.7 357.6 L20.0 352.7 Q20.4 351.7 21.0 351.7 Z" fill="#fff"/><rect x="24.1" y="382.1" width="5.0" height="4.7" rx=".7" fill="#fff"/><rect x="17.4" y="392.2" width="5.1" height="5.5" rx=".7" fill="#fff"/><rect x="24.1" y="392.2" width="5.1" height="5.5" rx=".7" fill="#fff"/><rect x="30.8" y="392.2" width="5.1" height="5.5" rx=".7" fill="#fff"/><path d="M26.6 386.5 V392.5 M19.95 392.5 V390.1 H33.35 V392.5" fill="none" stroke="#fff" stroke-width="1.3"/><path d="M23.2 423.7 L18.3 428.1 L23.2 432.5 M30.7 423.7 L35.6 428.1 L30.7 432.5 M28.5 421.5 L25.0 434.5" fill="none" stroke="#fff" stroke-width="1.5" stroke-linecap="round" stroke-linejoin="miter"/><rect x="18.9" y="466.9" width="14.5" height="18.1" rx=".6" fill="#fff"/><rect x="21.15" y="469.15" width="1.5" height="1.5" fill="#484848"/><rect x="21.15" y="471.85" width="1.5" height="1.5" fill="#484848"/><rect x="21.15" y="474.55" width="1.5" height="1.5" fill="#484848"/><rect x="21.15" y="477.15" width="1.5" height="1.5" fill="#484848"/><rect x="21.15" y="479.75" width="1.5" height="1.5" fill="#484848"/><rect x="23.95" y="469.15" width="1.5" height="1.5" fill="#484848"/><rect x="23.95" y="471.85" width="1.5" height="1.5" fill="#484848"/><rect x="23.95" y="474.55" width="1.5" height="1.5" fill="#484848"/><rect x="23.95" y="477.15" width="1.5" height="1.5" fill="#484848"/><rect x="26.65" y="469.15" width="1.5" height="1.5" fill="#484848"/><rect x="26.65" y="471.85" width="1.5" height="1.5" fill="#484848"/><rect x="26.65" y="474.55" width="1.5" height="1.5" fill="#484848"/><rect x="26.65" y="477.15" width="1.5" height="1.5" fill="#484848"/><rect x="29.45" y="469.15" width="1.5" height="1.5" fill="#484848"/><rect x="29.45" y="471.85" width="1.5" height="1.5" fill="#484848"/><rect x="29.45" y="474.55" width="1.5" height="1.5" fill="#484848"/><rect x="29.45" y="477.15" width="1.5" height="1.5" fill="#484848"/><rect x="29.45" y="479.75" width="1.5" height="1.5" fill="#484848"/><rect x="24.5" y="481.0" width="3.4" height="2.8" fill="#484848"/><g transform="translate(26.95,505.6) scale(0.93)"><path d="M-7.5 15.2 C-7.5 10.5 -6.3 8.3 -3.6 8.1 C-2.5 9.0 -1.3 9.5 0 9.5 C1.3 9.5 2.5 9.0 3.6 8.1 C6.3 8.3 7.5 10.5 7.5 15.2 C7.5 16.7 6.5 17.6 5.1 17.6 L-5.1 17.6 C-6.5 17.6 -7.5 16.7 -7.5 15.2 Z" fill="#fff"/><circle cx="0" cy="4.4" r="4.4" fill="#fff"/></g><circle cx="21.0" cy="544.3" r="2.7" fill="#fff"/><circle cx="32.9" cy="544.3" r="2.7" fill="#fff"/><path d="M16.9 551.0 Q16.9 547.4 19.6 547.3 Q21.3 548.4 22.7 547.6 Q22.2 550.2 23.6 552.3 Q21 552.3 20.0 553.4 H18.6 Q16.9 553.4 16.9 551.0 Z" fill="#fff"/><path d="M37.0 551.0 Q37.0 547.4 34.3 547.3 Q32.6 548.4 31.2 547.6 Q31.7 550.2 30.3 552.3 Q32.9 552.3 33.9 553.4 H35.3 Q37.0 553.4 37.0 551.0 Z" fill="#fff"/><circle cx="26.95" cy="548.9" r="4.5" fill="#484848"/><circle cx="26.95" cy="548.9" r="3.85" fill="#fff"/><path d="M19.6 558.8 C19.6 555.0 20.9 553.3 23.7 553.1 C24.7 554.0 25.8 554.4 26.95 554.4 C28.1 554.4 29.2 554.0 30.2 553.1 C33.0 553.3 34.3 555.0 34.3 558.8 C34.3 560.3 33.3 561.0 32.0 561.0 H21.9 C20.6 561.0 19.6 560.3 19.6 558.8 Z" fill="#fff"/><rect x="17.4" y="591.9" width="18.7" height="15.0" rx="1.7" fill="#fff"/><rect x="19.2" y="595.9" width="15.3" height="9.2" rx=".4" fill="#484848"/><rect x="22.8" y="597.15" width="10.4" height="1.5" fill="#fff"/><rect x="20.0" y="597.15" width="1.4" height="1.5" fill="#fff"/><rect x="22.8" y="599.75" width="10.4" height="1.5" fill="#fff"/><rect x="20.0" y="599.75" width="1.4" height="1.5" fill="#fff"/><rect x="22.8" y="602.35" width="10.4" height="1.5" fill="#fff"/><rect x="20.0" y="602.35" width="1.4" height="1.5" fill="#fff"/><path d="M26.5 628.3 Q27.5 628.3 27.6 629.5 C30.6 630.2 32.0 632.6 32.0 635.6 C32.0 639.6 33.1 641.9 35.3 643.6 Q35.3 644.8 34.2 644.8 H18.8 Q17.7 644.8 17.7 643.6 C19.9 641.9 21.0 639.6 21.0 635.6 C21.0 632.6 22.4 630.2 25.4 629.5 Q25.5 628.3 26.5 628.3 Z" fill="#fff"/><path d="M24.3 645.2 A2.2 2.2 0 0 0 28.7 645.2 Z" fill="#fff"/><rect x="17.4" y="668.8" width="18.5" height="13.4" rx="1.7" fill="#fff"/><path d="M23.5 669 V667.6 Q23.5 666.7 24.4 666.7 H29.0 Q29.9 666.7 29.9 667.6 V669" fill="none" stroke="#fff" stroke-width="1.5"/><rect x="17.4" y="674.8" width="18.5" height=".8" fill="#484848"/><rect x="24.3" y="674.8" width="4.4" height="3.0" fill="#484848"/><rect x="25.2" y="675.6" width="2.6" height="1.4" fill="#fff"/><rect x="17.4" y="704.9" width="18.7" height="4.3" rx=".8" fill="#fff"/><rect x="19.2" y="706.65" width="10" height=".85" fill="#484848"/><rect x="33.0" y="706.1999999999999" width="1.8" height="1.7" fill="#484848"/><rect x="17.4" y="710.4" width="18.7" height="4.3" rx=".8" fill="#fff"/><rect x="19.2" y="712.15" width="10" height=".85" fill="#484848"/><rect x="33.0" y="711.6999999999999" width="1.8" height="1.7" fill="#484848"/><rect x="17.4" y="715.9" width="18.7" height="4.3" rx=".8" fill="#fff"/><rect x="19.2" y="717.65" width="10" height=".85" fill="#484848"/><rect x="33.0" y="717.1999999999999" width="1.8" height="1.7" fill="#484848"/><path d="M26.2 741.1 L32.1 743.7 V749.0999999999999 L26.2 751.6999999999999 L20.299999999999997 749.0999999999999 V743.7 Z" fill="#fff" stroke="#484848" stroke-width=".7"/><path d="M26.2 742.4 L29.5 743.9000000000001 L26.2 745.4000000000001 L22.9 743.9000000000001 Z" fill="#484848"/><path d="M27.5 747.0 L30.9 745.4 V748.3 L27.5 749.9 Z" fill="#484848"/><path d="M20.6 749.4000000000001 L26.5 752.0000000000001 V757.4 L20.6 760.0 L14.700000000000001 757.4 V752.0000000000001 Z" fill="#fff" stroke="#484848" stroke-width=".7"/><path d="M20.6 750.7 L23.900000000000002 752.2000000000002 L20.6 753.7000000000002 L17.3 752.2000000000002 Z" fill="#484848"/><path d="M21.900000000000002 755.3000000000001 L25.3 753.7 V756.6 L21.900000000000002 758.2 Z" fill="#484848"/><path d="M31.9 749.4000000000001 L37.8 752.0000000000001 V757.4 L31.9 760.0 L26.0 757.4 V752.0000000000001 Z" fill="#fff" stroke="#484848" stroke-width=".7"/><path d="M31.9 750.7 L35.199999999999996 752.2000000000002 L31.9 753.7000000000002 L28.599999999999998 752.2000000000002 Z" fill="#484848"/><path d="M33.199999999999996 755.3000000000001 L36.6 753.7 V756.6 L33.199999999999996 758.2 Z" fill="#484848"/><path d="M24.61 782.83 L24.66 780.79 L27.06 780.79 L27.11 782.83 L29.13 783.67 L30.61 782.26 L32.30 783.95 L30.89 785.43 L31.73 787.45 L33.77 787.50 L33.77 789.90 L31.73 789.95 L30.89 791.97 L32.30 793.45 L30.61 795.14 L29.13 793.73 L27.11 794.57 L27.06 796.61 L24.66 796.61 L24.61 794.57 L22.59 793.73 L21.11 795.14 L19.42 793.45 L20.83 791.97 L19.99 789.95 L17.95 789.90 L17.95 787.50 L19.99 787.45 L20.83 785.43 L19.42 783.95 L21.11 782.26 L22.59 783.67 Z" fill="#fff" stroke="#fff" stroke-width=".6" stroke-linejoin="round"/><circle cx="25.86" cy="788.7" r="5.9" fill="#fff"/><circle cx="25.86" cy="788.7" r="2.3" fill="#484848"/><g transform="translate(0,0.00)" fill="#626977"><path d="M594.1 651.0 C594.0 653.0 593.5 655.0 592.6 656.6 C591.7 658.3 590.5 659.7 589.3 660.8 C589.4 662.9 588.6 664.6 586.5 666.1 C586.2 664.9 586.1 663.7 586.2 662.8 L584.9 663.0 C583.6 663.0 582.6 662.2 582.1 660.9 C581.8 660.1 581.7 659.4 581.8 658.8 C580.9 658.5 580.0 658.5 579.0 658.7 C580.6 656.6 583.0 655.6 585.8 655.8 C586.8 654.6 588.0 653.6 589.4 652.8 C590.9 651.9 592.5 651.3 594.1 651.0 Z"/><path d="M580.6 661.9 C579.6 663.2 579.4 664.6 580.0 665.5 C581.2 666.0 583.0 665.6 584.6 664.0 C583.2 664.6 581.9 664.6 581.4 664.1 C580.9 663.6 580.7 662.9 580.6 661.9 Z"/><circle cx="589.7" cy="655.7" r="1.25" fill="#fff"/></g><g transform="translate(0,38.85)" fill="#626977"><path d="M594.1 651.0 C594.0 653.0 593.5 655.0 592.6 656.6 C591.7 658.3 590.5 659.7 589.3 660.8 C589.4 662.9 588.6 664.6 586.5 666.1 C586.2 664.9 586.1 663.7 586.2 662.8 L584.9 663.0 C583.6 663.0 582.6 662.2 582.1 660.9 C581.8 660.1 581.7 659.4 581.8 658.8 C580.9 658.5 580.0 658.5 579.0 658.7 C580.6 656.6 583.0 655.6 585.8 655.8 C586.8 654.6 588.0 653.6 589.4 652.8 C590.9 651.9 592.5 651.3 594.1 651.0 Z"/><path d="M580.6 661.9 C579.6 663.2 579.4 664.6 580.0 665.5 C581.2 666.0 583.0 665.6 584.6 664.0 C583.2 664.6 581.9 664.6 581.4 664.1 C580.9 663.6 580.7 662.9 580.6 661.9 Z"/><circle cx="589.7" cy="655.7" r="1.25" fill="#fff"/></g><g transform="translate(0,77.70)" fill="#626977"><path d="M594.1 651.0 C594.0 653.0 593.5 655.0 592.6 656.6 C591.7 658.3 590.5 659.7 589.3 660.8 C589.4 662.9 588.6 664.6 586.5 666.1 C586.2 664.9 586.1 663.7 586.2 662.8 L584.9 663.0 C583.6 663.0 582.6 662.2 582.1 660.9 C581.8 660.1 581.7 659.4 581.8 658.8 C580.9 658.5 580.0 658.5 579.0 658.7 C580.6 656.6 583.0 655.6 585.8 655.8 C586.8 654.6 588.0 653.6 589.4 652.8 C590.9 651.9 592.5 651.3 594.1 651.0 Z"/><path d="M580.6 661.9 C579.6 663.2 579.4 664.6 580.0 665.5 C581.2 666.0 583.0 665.6 584.6 664.0 C583.2 664.6 581.9 664.6 581.4 664.1 C580.9 663.6 580.7 662.9 580.6 661.9 Z"/><circle cx="589.7" cy="655.7" r="1.25" fill="#fff"/></g><g transform="translate(0,116.55)" fill="#626977"><path d="M594.1 651.0 C594.0 653.0 593.5 655.0 592.6 656.6 C591.7 658.3 590.5 659.7 589.3 660.8 C589.4 662.9 588.6 664.6 586.5 666.1 C586.2 664.9 586.1 663.7 586.2 662.8 L584.9 663.0 C583.6 663.0 582.6 662.2 582.1 660.9 C581.8 660.1 581.7 659.4 581.8 658.8 C580.9 658.5 580.0 658.5 579.0 658.7 C580.6 656.6 583.0 655.6 585.8 655.8 C586.8 654.6 588.0 653.6 589.4 652.8 C590.9 651.9 592.5 651.3 594.1 651.0 Z"/><path d="M580.6 661.9 C579.6 663.2 579.4 664.6 580.0 665.5 C581.2 666.0 583.0 665.6 584.6 664.0 C583.2 664.6 581.9 664.6 581.4 664.1 C580.9 663.6 580.7 662.9 580.6 661.9 Z"/><circle cx="589.7" cy="655.7" r="1.25" fill="#fff"/></g><g transform="translate(0,155.40)" fill="#626977"><path d="M594.1 651.0 C594.0 653.0 593.5 655.0 592.6 656.6 C591.7 658.3 590.5 659.7 589.3 660.8 C589.4 662.9 588.6 664.6 586.5 666.1 C586.2 664.9 586.1 663.7 586.2 662.8 L584.9 663.0 C583.6 663.0 582.6 662.2 582.1 660.9 C581.8 660.1 581.7 659.4 581.8 658.8 C580.9 658.5 580.0 658.5 579.0 658.7 C580.6 656.6 583.0 655.6 585.8 655.8 C586.8 654.6 588.0 653.6 589.4 652.8 C590.9 651.9 592.5 651.3 594.1 651.0 Z"/><path d="M580.6 661.9 C579.6 663.2 579.4 664.6 580.0 665.5 C581.2 666.0 583.0 665.6 584.6 664.0 C583.2 664.6 581.9 664.6 581.4 664.1 C580.9 663.6 580.7 662.9 580.6 661.9 Z"/><circle cx="589.7" cy="655.7" r="1.25" fill="#fff"/></g></svg>
</body></html>
